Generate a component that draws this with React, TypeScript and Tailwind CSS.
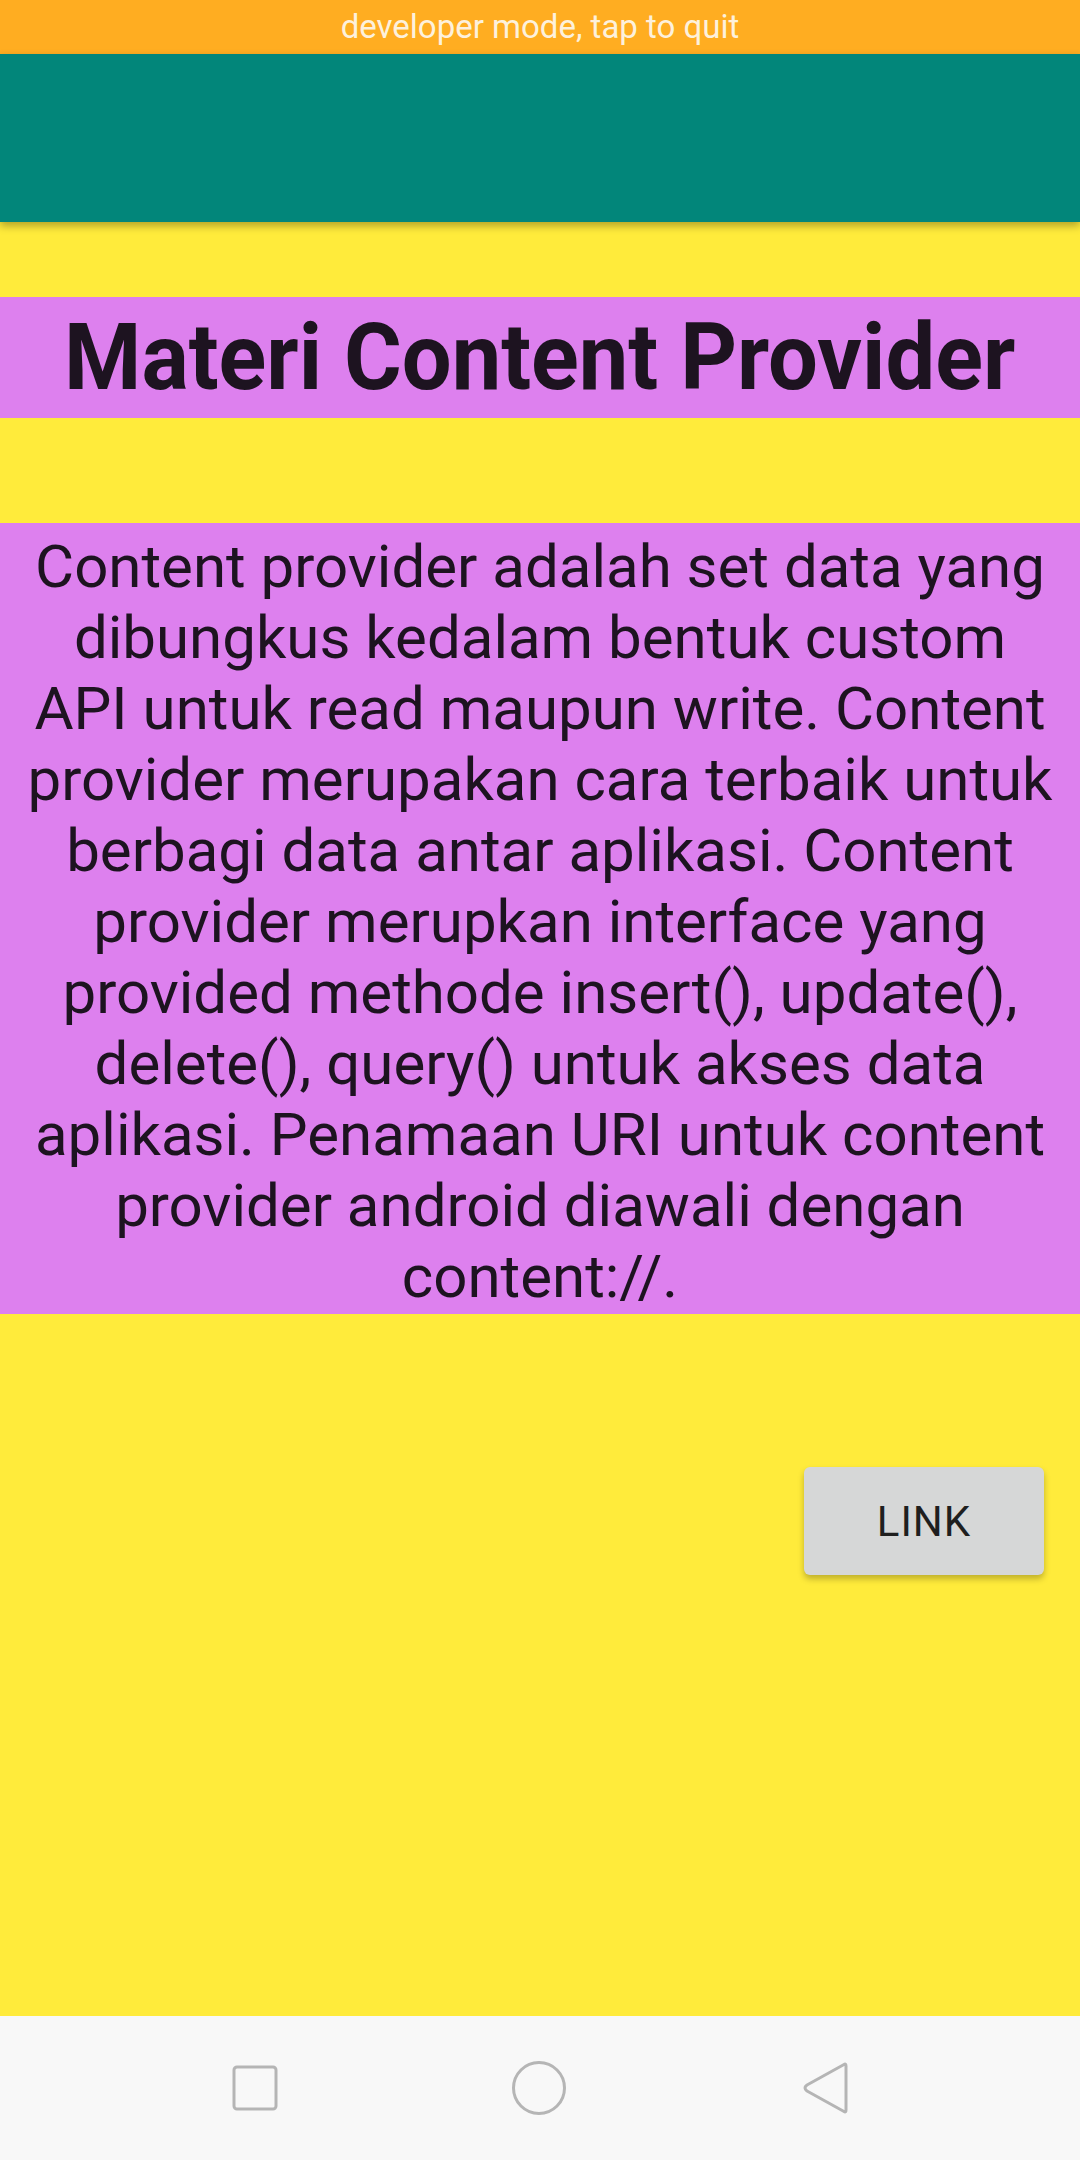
const lines = [
  "Content provider adalah set data yang",
  "dibungkus kedalam bentuk custom",
  "API untuk read maupun write. Content",
  "provider merupakan cara terbaik untuk",
  "berbagi data antar aplikasi. Content",
  "provider merupkan interface yang",
  "provided methode insert(), update(),",
  "delete(), query() untuk akses data",
  "aplikasi. Penamaan URI untuk content",
  "provider android diawali dengan",
  "content://.",
];

function NavBar() {
  return (
    <div className="flex h-[144px] items-center justify-between bg-[#f8f8f8] px-[230px]">
      <svg width="50" height="50" viewBox="0 0 50 50">
        <rect x="4" y="4" width="42" height="42" rx="3" fill="none" stroke="#b5b5b5" strokeWidth="3" />
      </svg>
      <svg width="56" height="56" viewBox="0 0 56 56">
        <circle cx="28" cy="28" r="25.5" fill="none" stroke="#b5b5b5" strokeWidth="3" />
      </svg>
      <svg width="52" height="56" viewBox="0 0 52 56">
        <path
          d="M46 4.5 Q48 3 48 6 L48 50 Q48 53 46 51.5 L9 31 Q5 28 9 25 Z"
          fill="none"
          stroke="#b5b5b5"
          strokeWidth="3"
          strokeLinejoin="round"
        />
      </svg>
    </div>
  );
}

export default function App() {
  return (
    <div className="flex min-h-[2160px] w-[1080px] flex-col bg-[#ffeb3b] font-['Roboto',sans-serif] text-[#1d1320]">
      <div className="flex h-[54px] items-center justify-center bg-[#ffad21] text-[33px] text-[#fdf1dc]">
        developer mode, tap to quit
      </div>
      <div className="relative z-10 h-[168px] bg-[#02867a] shadow-[0_4px_8px_rgba(0,0,0,0.3)]" />
      <div className="h-[75px]" />
      <div className="flex h-[121px] items-center justify-center bg-[#dd80ee]">
        <span className="inline-block scale-x-[0.95] whitespace-nowrap text-[93px] font-bold leading-none">
          Materi Content Provider
        </span>
      </div>
      <div className="h-[105px]" />
      <div className="flex flex-col items-center bg-[#dd80ee] pt-[8px] pb-[2px] text-[60px] leading-[71px]">
        {lines.map((l) => (
          <span key={l} className="whitespace-nowrap">
            {l}
          </span>
        ))}
      </div>
      <div className="flex justify-end pt-[153px] pr-[36px]">
        <button className="flex h-[108px] w-[240px] items-center justify-center rounded-[6px] bg-[#d6d7d7] text-[42px] tracking-[1px] text-[#1f1f1f] shadow-[0_4px_6px_rgba(0,0,0,0.25)]">
          LINK
        </button>
      </div>
      <div className="flex-1" />
      <NavBar />
    </div>
  );
}
